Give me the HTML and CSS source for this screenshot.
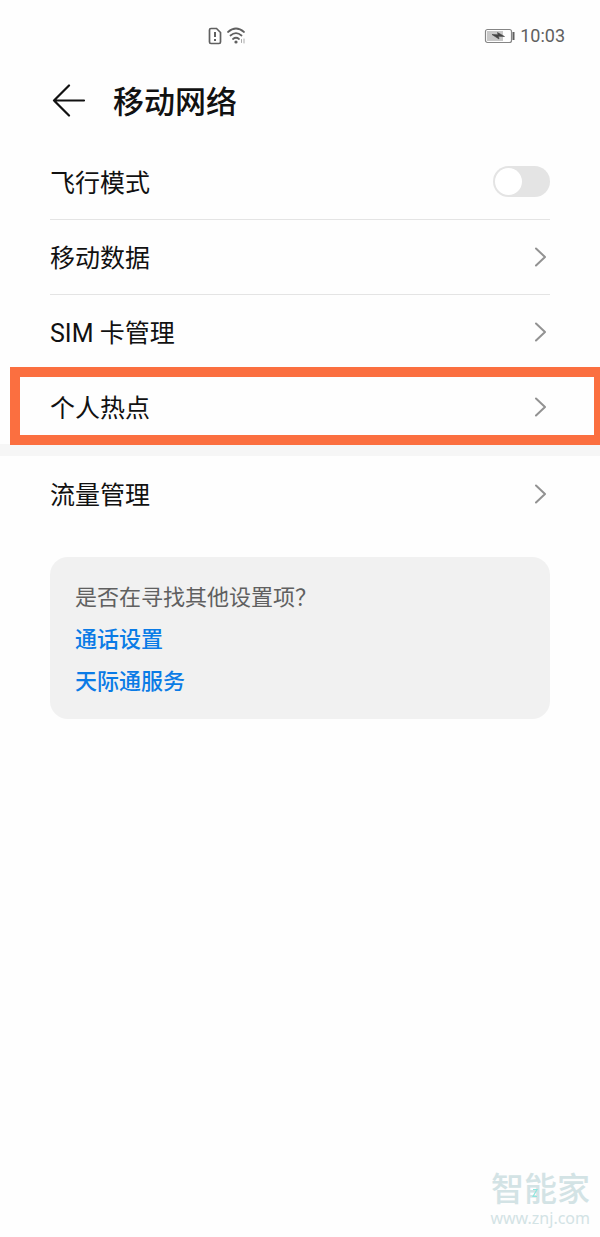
FILE: index.html
```html
<!DOCTYPE html>
<html lang="zh-CN">
<head>
<meta charset="utf-8">
<meta name="viewport" content="width=device-width, initial-scale=1">
<title>移动网络</title>
<link rel="stylesheet" href="styles.css">
</head>
<body>
<div class="screen">
  <div class="status">
    <div class="status-left">
      <svg width="14" height="18" viewBox="0 0 14 18" fill="none" stroke="#606060" stroke-width="1.7" aria-hidden="true">
        <path d="M3 1.500h5.500l4 4v9.500q0 1.500-1.500 1.500h-8q-1.500 0-1.500-1.500v-12q0-1.500 1.500-1.500z"/>
        <path d="M7 5v5M7 12v2" stroke-width="2"/>
      </svg>
      <svg width="20" height="18" viewBox="0 0 20 18" fill="none" stroke="#606060" stroke-width="1.700" stroke-linecap="round" aria-hidden="true">
        <path d="M1 5q8-7 16 0M3.500 8.500q5.500-4.700 11 0M6 12q3-2.500 6 0"/>
        <circle cx="9" cy="15" r="1.600" fill="#606060" stroke="none"/>
        <path d="M14.500 12.500v3M17 12v4" stroke="#aaa" stroke-width="1"/>
      </svg>
    </div>
    <div class="status-right">
      <svg width="31" height="16" viewBox="0 0 31 16" aria-hidden="true">
        <rect x="1.500" y="1.500" width="26" height="13" rx="2" fill="#fff" stroke="#858585" stroke-width="1.200"/>
        <rect x="3" y="3" width="16" height="10" fill="#c8c8c8"/>
        <path d="M8 6.500l6 .3-.5-2.300 7 4-6-.2.500 2.700z" fill="#444" stroke="#444" stroke-width=".6"/>
        <path d="M29.500 4v8" stroke="#606060" stroke-width="2"/>
      </svg>
      <time>10:03</time>
    </div>
  </div>

  <header class="header">
    <button class="back" type="button" aria-label="返回">
      <svg width="34" height="34" viewBox="0 0 34 34" fill="none" stroke="#111" stroke-width="2.200" stroke-linecap="round" stroke-linejoin="round" aria-hidden="true"><path d="M17 1.500L2 16.500l15 15M2 16.500h30"/></svg>
    </button>
    <h1 class="title">移动网络</h1>
  </header>

  <main>
    <div class="group">
      <label class="row"><span class="label">飞行模式</span><input class="switch" type="checkbox" role="switch"></label>
      <a class="row" href="#data"><span class="label">移动数据</span><svg class="chevron" viewBox="0 0 12 20" aria-hidden="true"><path d="M2 1.500L11 10l-9 8.500"/></svg></a>
      <a class="row" href="#sim"><span class="label">SIM 卡管理</span><svg class="chevron" viewBox="0 0 12 20" aria-hidden="true"><path d="M2 1.500L11 10l-9 8.500"/></svg></a>
      <a class="row marked" href="#hotspot"><span class="label">个人热点</span><svg class="chevron" viewBox="0 0 12 20" aria-hidden="true"><path d="M2 1.500L11 10l-9 8.500"/></svg></a>
    </div>
    <div class="group">
      <a class="row" href="#traffic"><span class="label">流量管理</span><svg class="chevron" viewBox="0 0 12 20" aria-hidden="true"><path d="M2 1.500L11 10l-9 8.500"/></svg></a>
    </div>
    <section class="card">
      <p class="question">是否在寻找其他设置项？</p>
      <a class="link" href="#call">通话设置</a>
      <a class="link" href="#skytone">天际通服务</a>
    </section>
  </main>

  <footer class="watermark">
    <div class="brand">智能家<svg class="spark" viewBox="0 0 6 10" aria-hidden="true"><path d="M1 1.500h4L1 8.500h4" fill="none" stroke="#8ee6df" stroke-width="1.200"/></svg></div>
    <div class="site">www.znj.com</div>
  </footer>
</div>
</body>
</html>
```

FILE: styles.css
```css
* { box-sizing: border-box; }
body {
  margin: 0;
  background: #fefefe;
  color: #111;
  font-family: Roboto, "Noto Sans CJK SC", sans-serif;
}
.screen {
  min-height: 100vh;
  display: flex;
  flex-direction: column;
  overflow-x: hidden;
}
.status {
  display: grid;
  grid-template-columns: 1fr auto;
  align-items: center;
  height: 71px;
  padding: 0 35px 0 208px;
}
.status-left, .status-right { display: flex; align-items: center; gap: 5px; }
.status-right { color: #606060; font-size: 18px; line-height: 24px; }
.header {
  display: flex;
  align-items: center;
  gap: 27px;
  height: 73px;
  padding: 0 52px 14px;
}
.back { display: flex; padding: 0; border: 0; background: none; }
.title { margin: 0; padding-top: 4px; font-size: 31px; line-height: 44px; font-weight: 500; }
.group { padding: 0 50px; }
.group + .group { border-top: 12px solid #f6f6f6; }
.row {
  position: relative;
  display: flex;
  align-items: center;
  justify-content: space-between;
  height: 75px;
  color: inherit;
  font-size: 25px;
  line-height: 36px;
  text-decoration: none;
}
.label { padding-top: 4px; }
.row + .row { border-top: 1px solid #e4e4e4; }
.row.marked { border-top-color: transparent; }
.marked::after {
  content: "";
  position: absolute;
  inset: -3px -50px -1px -40px;
  border: 10px solid #fb6f40;
  border-right-width: 6px;
}
.chevron {
  width: 12px;
  height: 20px;
  margin-right: 4px;
  fill: none;
  stroke: #929292;
  stroke-width: 2;
  stroke-linecap: round;
  stroke-linejoin: round;
}
.switch {
  appearance: none;
  display: flex;
  width: 57px;
  height: 31px;
  margin: 0;
  padding: 2px;
  border-radius: 16px;
  background: #e4e4e4;
}
.switch::before {
  content: "";
  width: 27px;
  height: 27px;
  border-radius: 50%;
  background: #fff;
}
.switch:checked { justify-content: flex-end; background: #0a7be6; }
.card {
  display: flex;
  flex-direction: column;
  align-items: flex-start;
  gap: 10px;
  margin: 26px 50px 0;
  padding: 25px 25px 21px;
  border-radius: 18px;
  background: #f1f1f1;
  font-size: 22px;
  line-height: 32px;
}
.question { margin: 0; color: #606060; }
.link { color: #0a7be6; font-weight: 500; text-decoration: none; }
.watermark {
  display: flex;
  flex-direction: column;
  align-items: flex-end;
  align-self: flex-end;
  margin-top: auto;
  padding: 0 10px 9px;
  color: #d3e3e5;
}
.brand { position: relative; font-size: 33px; line-height: 36px; font-weight: 500; }
.spark { position: absolute; left: 41px; top: 16px; width: 6px; height: 10px; }
.site { font-family: "Noto Sans", sans-serif; font-size: 16px; line-height: 20px; }
```
